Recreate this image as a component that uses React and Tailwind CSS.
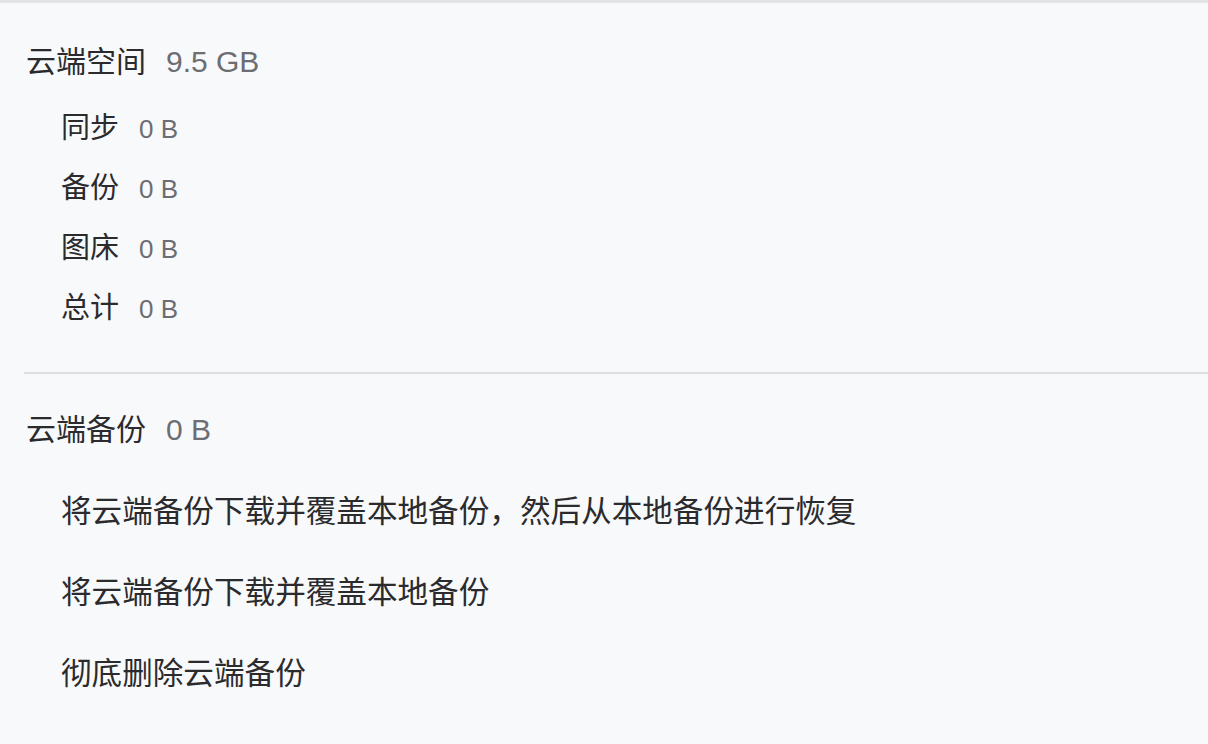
import React from "react";

const font = { fontFamily: '"Liberation Sans", "Noto Sans CJK SC", sans-serif' };

function Item({ label, value }) {
  return (
    <div className="h-[60px] flex items-center pl-[61px]">
      <span className="text-[29px] text-[#2b2b2d]">{label}</span>
      <span className="ml-[20px] text-[26px] text-[#6d6d72]">{value}</span>
    </div>
  );
}

function Action({ children }) {
  return (
    <div className="h-[81px] flex items-center pl-[61px] text-[30.6px] text-[#2b2b2d] cursor-pointer">
      {children}
    </div>
  );
}

export default function App() {
  return (
    <div
      className="min-h-screen w-full bg-[#f8f9fb] border-t-[3px] border-[#e4e4e6] overflow-hidden"
      style={font}
    >
      <div className="mt-[38px] h-[40px] flex items-center pl-[26px]">
        <span className="text-[30px] text-[#2b2b2d]">云端空间</span>
        <span className="ml-[20px] text-[30px] text-[#6d6d72]">9.5 GB</span>
      </div>
      <div className="mt-[18px]">
        <Item label="同步" value="0 B" />
        <Item label="备份" value="0 B" />
        <Item label="图床" value="0 B" />
        <Item label="总计" value="0 B" />
      </div>
      <div className="mt-[33px] ml-[24px] h-[2px] bg-[#dedee0]" />
      <div className="mt-[35px] h-[40px] flex items-center pl-[26px]">
        <span className="text-[30px] text-[#2b2b2d]">云端备份</span>
        <span className="ml-[20px] text-[30px] text-[#6d6d72]">0 B</span>
      </div>
      <div className="mt-[22px]">
        <Action>将云端备份下载并覆盖本地备份，然后从本地备份进行恢复</Action>
        <Action>将云端备份下载并覆盖本地备份</Action>
        <Action>彻底删除云端备份</Action>
      </div>
    </div>
  );
}
